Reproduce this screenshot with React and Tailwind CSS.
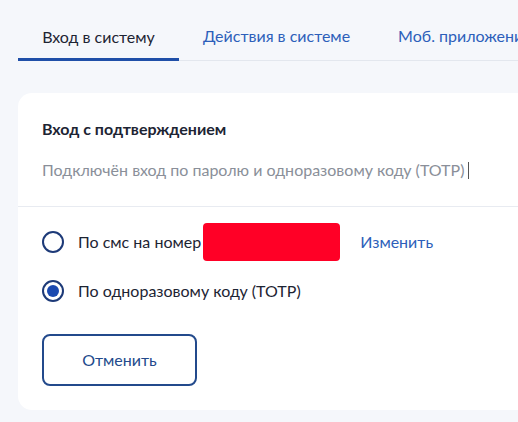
export default function App() {
  return (
    <div className="w-[518px] h-[422px] overflow-hidden bg-[#f5f7fb] pl-[18px] font-['Lato','Open_Sans',sans-serif]">
      <div className="flex border-b border-[#e3e7ee] h-[61px] items-end w-[600px]">
        <div className="w-[161px] text-center pb-[10px] border-b-[3px] border-[#1f4fa8] mb-[-1px] text-[16px] leading-[22px] text-[#1d2433] whitespace-nowrap shrink-0">
          Вход в систему
        </div>
        <div className="px-6 pb-[13px] text-[16px] leading-[22px] text-[#2d5fba] whitespace-nowrap shrink-0">
          Действия в системе
        </div>
        <div className="px-6 pb-[13px] text-[16px] leading-[22px] text-[#2d5fba] whitespace-nowrap shrink-0">
          Моб. приложения
        </div>
      </div>

      <div className="mt-[32px] bg-white rounded-l-[14px] w-[600px] h-[317px]">
        <div className="px-6 pt-[26px] pb-[25px]">
          <div className="text-[16px] leading-[20px] font-bold text-[#1d2433]">Вход с подтверждением</div>
          <div className="mt-[20px] text-[16px] leading-[22px] text-[#8a8f99] flex items-center whitespace-nowrap">
            Подключён вход по паролю и одноразовому коду (TOTP)
            <span className="ml-[4px] inline-block w-px h-[17px] bg-[#555]" />
          </div>
        </div>
        <div className="border-t border-[#e8ebf1]" />
        <div className="px-6 pt-[16px]">
          <div className="flex items-center h-[38px]">
            <span className="w-[22px] h-[22px] rounded-full border-2 border-[#1d3a78] shrink-0" />
            <span className="ml-[14px] text-[16px] text-[#1d2433]">По смс на номер</span>
            <span className="ml-[2px] w-[137px] h-[38px] rounded-[4px] bg-[#ff0026]" />
            <span className="ml-[20px] text-[16px] text-[#2d5fba]">Изменить</span>
          </div>
          <div className="flex items-center h-[22px] mt-[19px]">
            <span className="w-[22px] h-[22px] rounded-full border-2 border-[#1d3a78] shrink-0 flex items-center justify-center">
              <span className="w-[12px] h-[12px] rounded-full bg-[#1a49b0]" />
            </span>
            <span className="ml-[14px] text-[16px] text-[#1d2433]">По одноразовому коду (TOTP)</span>
          </div>
          <button className="mt-[32px] w-[155px] h-[52px] rounded-[8px] border-2 border-[#234a8c] text-[16px] text-[#234a8c] bg-white">
            Отменить
          </button>
        </div>
      </div>
    </div>
  );
}
